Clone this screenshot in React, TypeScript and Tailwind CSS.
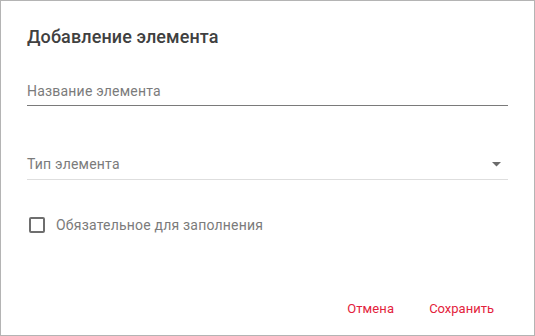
export default function App() {
  return (
    <div
      className="h-[336px] w-[535px] border border-[#b4b4b4] bg-white"
      style={{ fontFamily: 'Roboto, "Noto Sans", sans-serif' }}
    >
      <div className="flex h-full flex-col px-[26px]">
        {/* Title */}
        <h2 className="mt-[25px] text-[18px] font-medium leading-[22px] tracking-[0.1px] text-[#404040]">
          Добавление элемента
        </h2>

        {/* Name field */}
        <div className="mt-[31px] border-b border-[#7a7a7a] pb-[2px]">
          <span className="text-[14px] leading-[20px] tracking-[0.2px] text-[#7b7b7b]">Название элемента</span>
        </div>

        {/* Type select */}
        <div className="mt-[48px] flex items-center justify-between border-b border-[#dedede] pb-[5px]">
          <span className="text-[14px] leading-[20px] tracking-[0.2px] text-[#7b7b7b]">Тип элемента</span>
          <svg width="9" height="5" viewBox="0 0 9 5" className="mr-[7px]">
            <path d="M0 0h9L4.5 4.5z" fill="#6b6b6b" />
          </svg>
        </div>

        {/* Checkbox */}
        <label className="mt-[35px] ml-[2px] flex items-center gap-[11px]">
          <span className="h-[16px] w-[16px] rounded-[2px] border-2 border-[#6e6e6e]" />
          <span className="text-[14px] leading-[20px] tracking-[0.2px] text-[#7b7b7b]">Обязательное для заполнения</span>
        </label>

        {/* Actions */}
        <div className="mt-auto mb-[16px] flex justify-end gap-[35px] pr-[14px]">
          <button className="text-[13px] leading-[20px] tracking-[0.1px] text-[#e3223c]">Отмена</button>
          <button className="text-[13px] leading-[20px] text-[#e3223c]">Сохранить</button>
        </div>
      </div>
    </div>
  )
}
